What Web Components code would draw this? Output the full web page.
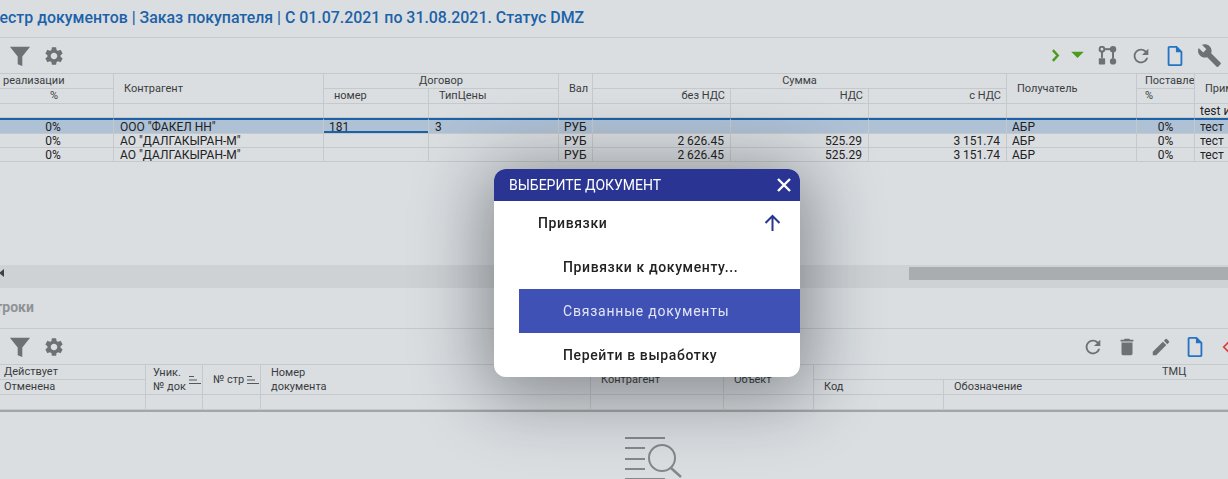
<!DOCTYPE html>
<html lang="ru"><head><meta charset="utf-8"><title>Реестр документов</title>
<style>
html,body{margin:0;padding:0;width:1228px;height:479px;overflow:hidden;background:#dadee1;font-family:Roboto,"Liberation Sans",sans-serif}
</style></head><body>
<app-page>
  <doc-title>Реестр документов | Заказ покупателя | С 01.07.2021 по 31.08.2021. Статус DMZ</doc-title>
  <tool-bar>
    <tool-icon name="filter"></tool-icon><tool-icon name="gear"></tool-icon>
    <tool-icon slot="end" name="chev" w="20" size="13" color="#4d9a1e"></tool-icon>
    <tool-icon slot="end" name="tri" w="26" size="15" color="#4d9a1e"></tool-icon>
    <tool-icon slot="end" name="git" size="19"></tool-icon>
    <tool-icon slot="end" name="refresh"></tool-icon>
    <tool-icon slot="end" name="file" color="#2473c4"></tool-icon>
    <tool-icon slot="end" name="wrench" size="25"></tool-icon>
  </tool-bar>
  <data-grid cols="114 210 105 130 34 138 138 138 130 58 34" rows="15 15 14 16 14 14">
    <grid-cell c="1" r="1" pl="3">реализации</grid-cell>
    <grid-cell c="1" r="2" align="center" pr="5">%</grid-cell>
    <grid-cell c="2" r="1" rs="2" pl="10">Контрагент</grid-cell>
    <grid-cell c="3" r="1" cs="2" align="center">Договор</grid-cell>
    <grid-cell c="3" r="2" pl="10">номер</grid-cell>
    <grid-cell c="4" r="2" pl="10">ТипЦены</grid-cell>
    <grid-cell c="5" r="1" rs="2" pl="10">Вал</grid-cell>
    <grid-cell c="6" r="1" cs="3" align="center">Сумма</grid-cell>
    <grid-cell c="6" r="2" align="end" pr="5">без НДС</grid-cell>
    <grid-cell c="7" r="2" align="end" pr="5">НДС</grid-cell>
    <grid-cell c="8" r="2" align="end" pr="5">с НДС</grid-cell>
    <grid-cell c="9" r="1" rs="2" pl="10">Получатель</grid-cell>
    <grid-cell c="10" r="1" pl="8">Поставле</grid-cell>
    <grid-cell c="10" r="2" pl="8">%</grid-cell>
    <grid-cell c="11" r="1" rs="2" pl="10">Примечание</grid-cell>
    <grid-cell c="1" r="3"></grid-cell><grid-cell c="2" r="3"></grid-cell><grid-cell c="3" r="3"></grid-cell><grid-cell c="4" r="3"></grid-cell><grid-cell c="5" r="3"></grid-cell><grid-cell c="6" r="3"></grid-cell><grid-cell c="7" r="3"></grid-cell><grid-cell c="8" r="3"></grid-cell><grid-cell c="9" r="3"></grid-cell><grid-cell c="10" r="3"></grid-cell><grid-cell c="11" r="3" pl="5" dark>test и</grid-cell>

    <grid-cell sel c="1" r="4" align="center" pr="7" dark>0%</grid-cell>
    <grid-cell sel c="2" r="4" pl="6" dark>ООО "ФАКЕЛ НН"</grid-cell>
    <grid-cell sel active c="3" r="4" pl="5" dark>181</grid-cell>
    <grid-cell sel c="4" r="4" pl="6" dark>3</grid-cell>
    <grid-cell sel c="5" r="4" pl="5" dark>РУБ</grid-cell>
    <grid-cell sel c="6" r="4"></grid-cell><grid-cell sel c="7" r="4"></grid-cell><grid-cell sel c="8" r="4"></grid-cell>
    <grid-cell sel c="9" r="4" pl="5" dark>АБР</grid-cell>
    <grid-cell sel c="10" r="4" align="center" dark>0%</grid-cell>
    <grid-cell sel c="11" r="4" pl="5" dark>тест</grid-cell>

    <grid-cell c="1" r="5" align="center" pr="7" dark>0%</grid-cell>
    <grid-cell c="2" r="5" pl="6" dark>АО "ДАЛГАКЫРАН-М"</grid-cell>
    <grid-cell c="3" r="5"></grid-cell><grid-cell c="4" r="5"></grid-cell>
    <grid-cell c="5" r="5" pl="5" dark>РУБ</grid-cell>
    <grid-cell c="6" r="5" align="end" pr="6" dark>2 626.45</grid-cell>
    <grid-cell c="7" r="5" align="end" pr="6" dark>525.29</grid-cell>
    <grid-cell c="8" r="5" align="end" pr="6" dark>3 151.74</grid-cell>
    <grid-cell c="9" r="5" pl="5" dark>АБР</grid-cell>
    <grid-cell c="10" r="5" align="center" dark>0%</grid-cell>
    <grid-cell c="11" r="5" pl="5" dark>тест</grid-cell>

    <grid-cell c="1" r="6" align="center" pr="7" dark>0%</grid-cell>
    <grid-cell c="2" r="6" pl="6" dark>АО "ДАЛГАКЫРАН-М"</grid-cell>
    <grid-cell c="3" r="6"></grid-cell><grid-cell c="4" r="6"></grid-cell>
    <grid-cell c="5" r="6" pl="5" dark>РУБ</grid-cell>
    <grid-cell c="6" r="6" align="end" pr="6" dark>2 626.45</grid-cell>
    <grid-cell c="7" r="6" align="end" pr="6" dark>525.29</grid-cell>
    <grid-cell c="8" r="6" align="end" pr="6" dark>3 151.74</grid-cell>
    <grid-cell c="9" r="6" pl="5" dark>АБР</grid-cell>
    <grid-cell c="10" r="6" align="center" dark>0%</grid-cell>
    <grid-cell c="11" r="6" pl="5" dark>тест</grid-cell>
  </data-grid>
  <h-scroll></h-scroll>
  <section-label>Строки</section-label>
  <tool-bar overflow>
    <tool-icon name="filter"></tool-icon><tool-icon name="gear"></tool-icon>
    <tool-icon slot="end" name="refresh"></tool-icon>
    <tool-icon slot="end" name="trash"></tool-icon>
    <tool-icon slot="end" name="pencil"></tool-icon>
    <tool-icon slot="end" name="file" color="#2473c4"></tool-icon>
    <tool-icon slot="end" name="diamond" size="14" color="#d9413c"></tool-icon>
  </tool-bar>
  <data-grid heavy cols="146 57 58 330 133 90 130 285" rows="15 15 15">
    <grid-cell c="1" r="1" pl="4">Действует</grid-cell>
    <grid-cell c="1" r="2" pl="4">Отменена</grid-cell>
    <grid-cell c="2" r="1" rs="2" pl="7" sort>Уник.<br>№ док</grid-cell>
    <grid-cell c="3" r="1" rs="2" pl="10" sort>№ стр</grid-cell>
    <grid-cell c="4" r="1" rs="2" pl="10">Номер<br>документа</grid-cell>
    <grid-cell c="5" r="1" rs="2" pl="10">Контрагент</grid-cell>
    <grid-cell c="6" r="1" rs="2" pl="10">Объект</grid-cell>
    <grid-cell c="7" r="1" cs="2" pl="348" wide>ТМЦ</grid-cell>
    <grid-cell c="7" r="2" pl="10">Код</grid-cell>
    <grid-cell c="8" r="2" pl="10">Обозначение</grid-cell>
    <grid-cell c="1" r="3"></grid-cell><grid-cell c="2" r="3"></grid-cell><grid-cell c="3" r="3"></grid-cell><grid-cell c="4" r="3"></grid-cell><grid-cell c="5" r="3"></grid-cell><grid-cell c="6" r="3"></grid-cell><grid-cell c="7" r="3"></grid-cell><grid-cell c="8" r="3"></grid-cell>
  </data-grid>
  <empty-state></empty-state>
</app-page>
<doc-modal heading="ВЫБЕРИТЕ ДОКУМЕНТ">
  <menu-row group>Привязки</menu-row>
  <menu-row>Привязки к документу...</menu-row>
  <menu-row selected>Связанные документы</menu-row>
  <menu-row>Перейти в выработку</menu-row>
</doc-modal>
<script>
const ICONS={
filter:'<path d="M1 2h22l-8.500 10.500V23l-5-2v-8.500z"/>',
gear:'<path d="M19.14 12.94c.04-.3.06-.61.06-.94 0-.32-.02-.64-.07-.94l2.03-1.58a.49.49 0 0 0 .12-.61l-1.92-3.32a.488.488 0 0 0-.59-.22l-2.39.96c-.5-.38-1.03-.7-1.62-.94l-.36-2.54a.484.484 0 0 0-.48-.41h-3.84c-.24 0-.43.17-.47.41l-.36 2.54c-.59.24-1.13.57-1.62.94l-2.39-.96c-.22-.08-.47 0-.59.22L2.74 8.87c-.12.21-.08.47.12.61l2.03 1.58c-.05.3-.09.63-.09.94s.02.64.07.94l-2.03 1.58a.49.49 0 0 0-.12.61l1.92 3.32c.12.22.37.29.59.22l2.39-.96c.5.38 1.03.7 1.62.94l.36 2.54c.05.24.24.41.48.41h3.84c.24 0 .44-.17.47-.41l.36-2.54c.59-.24 1.13-.56 1.62-.94l2.39.96c.22.08.47 0 .59-.22l1.92-3.32c.12-.22.07-.47-.12-.61l-2.01-1.58zM12 15.6c-1.98 0-3.6-1.62-3.6-3.6s1.62-3.6 3.6-3.6 3.6 1.62 3.6 3.6-1.62 3.6-3.6 3.6z"/>',
refresh:'<path d="M17.65 6.35A7.95 7.95 0 0 0 12 4c-4.42 0-7.99 3.58-7.99 8s3.57 8 7.99 8c3.73 0 6.84-2.55 7.73-6h-2.08A5.99 5.99 0 0 1 12 18c-3.31 0-6-2.69-6-6s2.69-6 6-6c1.66 0 3.14.69 4.22 1.78L13 11h7V4l-2.35 2.35z"/>',
trash:'<path d="M6 19c0 1.1.9 2 2 2h8c1.1 0 2-.9 2-2V7H6v12zM19 4h-3.5l-1-1h-5l-1 1H5v2h14V4z"/>',
pencil:'<path d="M3 17.25V21h3.75L17.81 9.94l-3.75-3.75L3 17.25zM20.71 7.04a1 1 0 0 0 0-1.41l-2.34-2.34a1 1 0 0 0-1.41 0l-1.83 1.83 3.75 3.75 1.83-1.83z"/>',
file:'<path d="M14 1H6C4.9 1 4 1.9 4 3v18c0 1.1.9 2 2 2h12c1.1 0 2-.9 2-2V7l-6-6zm4 20H6V3h7v5h5v13z"/>',
wrench:'<path d="M22.7 19l-9.1-9.1c.9-2.3.4-5-1.5-6.9-2-2-5-2.4-7.4-1.3L9 6 6 9 1.6 4.7C.4 7.1.9 10.1 2.9 12.1c1.9 1.9 4.600 2.4 6.9 1.5l9.1 9.1c.4.4 1 .4 1.4 0l2.3-2.3c.5-.4.5-1.1.1-1.4z"/>',
chev:'<path d="M9 2l9 10-9 10" fill="none" stroke="currentColor" stroke-width="4.500"/>',
tri:'<path d="M2 6h20L12 16z"/>',
git:'<circle cx="5" cy="4" r="3" fill="none" stroke="currentColor" stroke-width="2.500"/><path d="M5 7v8" stroke="currentColor" stroke-width="2.500"/><rect x="1" y="15.500" width="8" height="8" rx="1"/><path d="M8 4h8" stroke="currentColor" stroke-width="2.500"/><circle cx="19" cy="4" r="4"/><path d="M19 7v9" stroke="currentColor" stroke-width="2.500"/><circle cx="19" cy="19.500" r="4"/>',
diamond:'<path d="M12 3l9 9-9 9-9-9z" fill="none" stroke="currentColor" stroke-width="3"/>'
};
function def(name,css,html,init){
  customElements.define(name,class extends HTMLElement{
    constructor(){super();this.attachShadow({mode:'open'}).innerHTML='<style>'+css+'</style>'+html;}
    connectedCallback(){if(init)init(this);}
  });
}
def('app-page',':host{display:flex;flex-direction:column;width:1228px;height:479px;overflow:hidden;background:#dadee1;font-family:Roboto,"Liberation Sans",sans-serif}','<slot></slot>');
def('doc-title',':host{display:block;flex:none;height:37px;border-bottom:1px solid #c5c9cc;overflow:hidden;white-space:nowrap;line-height:36px;font-size:15.9px;font-weight:500;color:#1c62a8;text-indent:-19px}','<slot></slot>');
def('tool-bar',':host{display:flex;flex:none;height:35px;border-bottom:1px solid #c5c9cc;align-items:center;justify-content:space-between;padding:0 2px 0 3px;overflow:hidden}:host([overflow]){padding-right:0}.g{display:flex;align-items:center;flex:none}:host([overflow]) .e{margin-right:-18px}','<div class="g"><slot></slot></div><div class="g e"><slot name="end"></slot></div>');
def('tool-icon',':host{display:flex;flex:none;width:34px;height:35px;align-items:center;justify-content:center;color:#6e7174}svg{width:22px;height:22px;fill:currentColor;display:block}',
 '<svg viewBox="0 0 24 24"></svg>',el=>{
  const s=el.shadowRoot.querySelector('svg');
  s.innerHTML=ICONS[el.getAttribute('name')]||'';
  if(el.hasAttribute('size')){s.style.width=s.style.height=el.getAttribute('size')+'px';}
  if(el.hasAttribute('color'))el.style.color=el.getAttribute('color');
  if(el.hasAttribute('w'))el.style.width=el.getAttribute('w')+'px';
 });
def('data-grid',':host{display:grid;flex:none;overflow:hidden;width:1228px;font-size:11px;color:#3a3d40}:host([heavy]){border-bottom:2px solid #a2a6a8}','<slot></slot>',el=>{
  el.style.gridTemplateColumns=el.getAttribute('cols').split(' ').map(v=>v+'px').join(' ');
  el.style.gridTemplateRows=el.getAttribute('rows').split(' ').map(v=>v+'px').join(' ');
});
def('grid-cell',`:host{display:flex;position:relative;box-sizing:border-box;align-items:center;border-right:1px solid #c5c9cc;border-bottom:1px solid #c5c9cc;white-space:nowrap;overflow:hidden;line-height:14px;min-width:0}
:host([wide]){overflow:visible;border-right:0}
:host([dark]){color:#222;font-size:12px}
:host([sel]){background:#afc1d5;border-top:2px solid #1c62a8}
:host([active]){box-shadow:inset 0 -2px 0 #1c62a8}
.t{flex:none}
svg{flex:none;width:12px;height:8px;margin-left:3px;align-self:center;stroke:#55585a;stroke-width:1;fill:none}`,
 '<span class="t"><slot></slot></span>',el=>{
  const g=(a,d)=>el.getAttribute(a)||d;
  el.style.gridColumn=g('c')+' / span '+g('cs',1);
  el.style.gridRow=g('r')+' / span '+g('rs',1);
  el.style.paddingLeft=g('pl',0)+'px';
  el.style.paddingRight=g('pr',0)+'px';
  const al=g('align','start');
  el.style.justifyContent=al==='center'?'center':al==='end'?'flex-end':'flex-start';
  if(el.hasAttribute('sort')&&!el.shadowRoot.querySelector('svg')){
    const s=document.createElementNS('http://www.w3.org/2000/svg','svg');
    s.setAttribute('viewBox','0 0 12 8');
    s.innerHTML='<path d="M0 .5h5M0 4h8M0 7.5h12"/>';
    el.shadowRoot.appendChild(s);
  }
});
def('h-scroll',`:host{display:flex;flex:none;height:23px;margin-top:103px;background:#ced2d5;position:relative;overflow:hidden;box-sizing:border-box;padding:2px 0 8px 909px}
.a{position:absolute;top:4px;left:-1px;border:4px solid transparent;border-right:5px solid #3d4043;border-left:0}
.t{flex:1;background:#a9adb0}`,'<div class="a"></div><div class="t"></div>');
def('section-label',':host{display:block;flex:none;height:40px;line-height:39px;font-size:14px;font-weight:700;color:#8f9396;border-bottom:1px solid #c5c9cc;text-indent:-14px;white-space:nowrap;overflow:hidden}','<slot></slot>');
def('empty-state',':host{display:flex;flex:1;justify-content:center;padding-top:24px;padding-left:82px;box-sizing:border-box}svg{width:62px;height:46px;flex:none;margin-left:-2px;fill:none;stroke:#84888b;stroke-width:2;overflow:visible}',
 '<svg viewBox="0 0 62 46"><path d="M2 2h40M2 12h20M2 23h20M2 33h20M2 43h40"/><circle cx="39" cy="22" r="13"/><path d="M48 32l10 9" stroke-width="2.400"/></svg>');
def('doc-modal',`:host{position:fixed;left:494px;top:169px;width:306px;height:208px;border-radius:12px;background:#fff;display:block;overflow:hidden;box-shadow:0 10px 70px 10px rgba(20,24,28,.42);font-family:Roboto,"Liberation Sans",sans-serif}
.h{height:32px;background:#2a3593;color:#fff;display:flex;align-items:center;justify-content:space-between;padding:0 8px 0 15px;font-size:14px}
svg{width:16px;height:16px;display:block;stroke:#fff;stroke-width:2.400;fill:none}`,
 '<div class="h"><span id="h"></span><svg viewBox="0 0 16 16"><path d="M2 2l12 12M14 2L2 14"/></svg></div><slot></slot>',el=>{
  el.shadowRoot.getElementById('h').textContent=el.getAttribute('heading');
 });
def('menu-row',`:host{display:flex;align-items:center;justify-content:space-between;height:44px;box-sizing:border-box;margin-left:25px;padding:0 19px 0 44px;font-size:14px;font-weight:500;letter-spacing:.62px;color:#222;white-space:nowrap}
:host([group]){margin-left:0;padding-left:44px}
:host([selected]){background:#3f51b5;color:#e2e5f5;font-weight:400;letter-spacing:.78px}
svg{width:17px;height:18px;stroke:#2a3593;stroke-width:2;fill:none;flex:none;display:none}
:host([group]) svg{display:block}`,
 '<span><slot></slot></span><svg viewBox="0 0 17 18"><path d="M8.500 17V2M1.500 9L8.500 2l7 7"/></svg>');
</script>
</body></html>
